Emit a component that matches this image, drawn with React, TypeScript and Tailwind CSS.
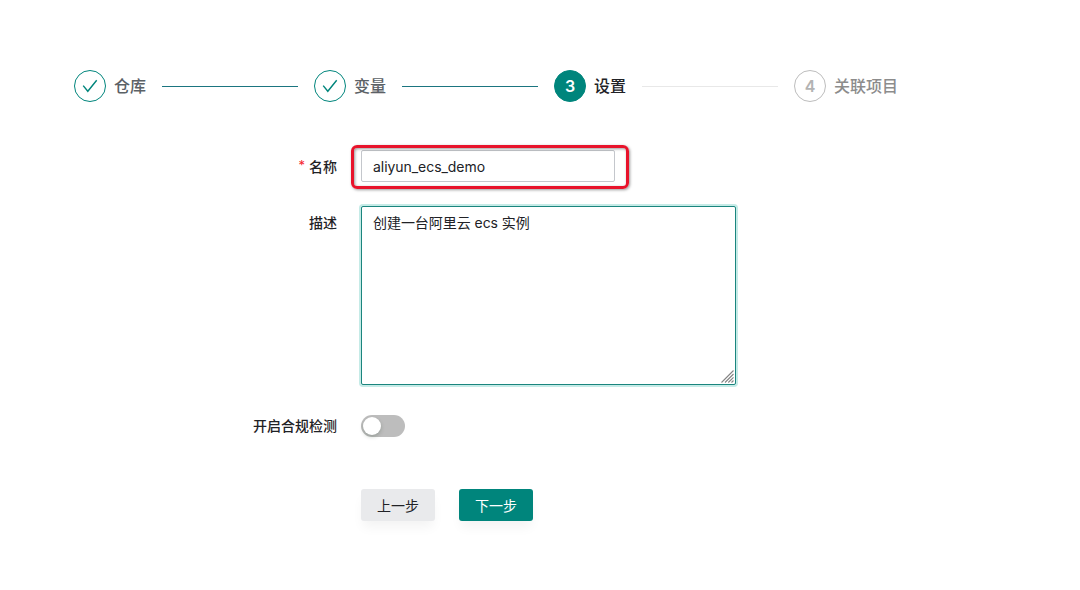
import { useState } from "react";
import type { ReactNode } from "react";

type StepStatus = "finish" | "process" | "wait";

interface StepItem {
  title: string;
  status: StepStatus;
}

const steps: StepItem[] = [
  { title: "仓库", status: "finish" },
  { title: "变量", status: "finish" },
  { title: "设置", status: "process" },
  { title: "关联项目", status: "wait" },
];

const circleStyles: Record<StepStatus, string> = {
  finish: "border-[#00857c] bg-white text-[#00857c]",
  process: "border-[#00857c] bg-[#00857c] text-white",
  wait: "border-[#bdbdbd] bg-white text-[#b3b3b3]",
};

const titleStyles: Record<StepStatus, string> = {
  finish: "text-[#5b6166]",
  process: "text-[#212226]",
  wait: "text-[#8c8c8c]",
};

function CheckIcon() {
  return (
    <svg width="16" height="16" viewBox="0 0 16 16" fill="none" stroke="currentColor" strokeWidth="1.4">
      <path d="M1.2 7.6 5.8 13.3 14.7 2.2" />
    </svg>
  );
}

function Step({ item, index, last }: { item: StepItem; index: number; last: boolean }) {
  const done = item.status === "finish";
  return (
    <div className="flex items-center">
      <div
        className={`flex size-8 items-center justify-center rounded-full border text-base font-semibold ${circleStyles[item.status]}`}
      >
        {done ? <CheckIcon /> : index + 1}
      </div>
      <div className={`ml-2 text-base leading-8 font-medium whitespace-nowrap ${titleStyles[item.status]}`}>
        {item.title}
      </div>
      {!last && <div className={`mx-4 mt-px h-px w-[136px] ${done ? "bg-[#1b7580]" : "bg-[#e8e8e8]"}`} />}
    </div>
  );
}

function FormRow({ label, required, children }: { label: string; required?: boolean; children: ReactNode }) {
  return (
    <div className="flex">
      <div className="mr-6 flex h-[33px] w-[337px] shrink-0 items-center justify-end pt-px font-medium text-[#1f2226]">
        {required && <span className="mr-1 h-[22px] text-[13px] leading-[18px] font-normal text-[#f5222d]">*</span>}
        {label}
      </div>
      {children}
    </div>
  );
}

export default function App() {
  const [name, setName] = useState("aliyun_ecs_demo");
  const [description, setDescription] = useState("创建一台阿里云 ecs 实例");
  const [enabled, setEnabled] = useState(false);

  return (
    <div className="h-[590px] w-[1080px] overflow-hidden bg-white font-['Inter','Noto_Sans_CJK_SC',sans-serif] text-sm text-[#212226]">
      <div className="flex pt-[70px] pl-[74px]">
        {steps.map((item, i) => (
          <Step key={item.title} item={item} index={i} last={i === steps.length - 1} />
        ))}
      </div>

      <div className="mt-12 flex flex-col">
        <FormRow label="名称" required>
          <div className="relative">
            <input
              value={name}
              onChange={(e) => setName(e.target.value)}
              className="block h-8 w-[254px] rounded-[2px] border border-[#c4c7cc] bg-white px-[11px] tracking-[-0.05px] outline-none"
            />
            <div className="pointer-events-none absolute -top-[5px] -left-[10px] h-11 w-[278px] rounded-[6px] border-3 border-[#e8132b] shadow-[1px_1px_3px_rgba(0,0,0,0.4),inset_1px_1px_3px_rgba(0,0,0,0.4)]" />
          </div>
        </FormRow>

        <div className="mt-[23px]">
          <FormRow label="描述">
            <div className="relative">
              <textarea
                value={description}
                onChange={(e) => setDescription(e.target.value)}
                className="block h-[179px] w-[375px] resize-none rounded-[2px] border border-[#1b857e] bg-white px-[11px] py-[5px] leading-[22px] tracking-[-0.05px] shadow-[0_0_0_2px_#c5ebe7] outline-none"
              />
              <svg
                className="pointer-events-none absolute right-[2px] bottom-[2px]"
                width="13"
                height="13"
                viewBox="0 0 13 13"
                stroke="#858585"
                strokeWidth="1.1"
              >
                <path d="M0.5 12.5 12.5 0.5M4 12.5 12.5 4M7.3 12.5 12.5 7.3M10.5 12.5 12.5 10.5" />
              </svg>
            </div>
          </FormRow>
        </div>

        <div className="mt-6">
          <FormRow label="开启合规检测">
            <div className="flex h-[34px] items-center">
              <button
                type="button"
                role="switch"
                aria-checked={enabled}
                onClick={() => setEnabled(!enabled)}
                className={`flex h-[22px] w-11 items-center rounded-full px-0.5 ${enabled ? "justify-end bg-[#00857c]" : "justify-start bg-[#bdbdbd]"}`}
              >
                <span className="size-[18px] rounded-full bg-white shadow-[0_2px_4px_rgba(0,35,11,0.2)]" />
              </button>
            </div>
          </FormRow>
        </div>

        <div className="mt-[46px] ml-[361px] flex gap-6">
          <button className="h-8 w-[74px] rounded-[3px] bg-[#e9eaec] pt-0.5 shadow-[0_8px_12px_-2px_rgba(0,0,0,0.05)]">
            上一步
          </button>
          <button className="h-8 w-[74px] rounded-[3px] bg-[#00857c] pt-0.5 text-white shadow-[0_8px_12px_-2px_rgba(0,0,0,0.05)]">
            下一步
          </button>
        </div>
      </div>
    </div>
  );
}
